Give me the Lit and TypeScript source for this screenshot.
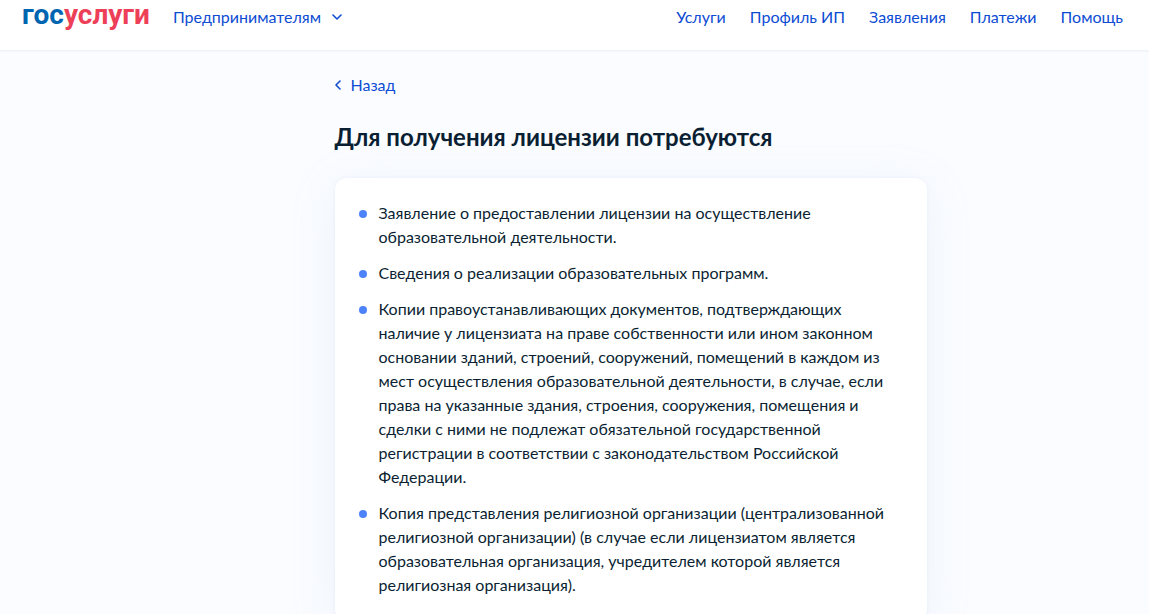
import { LitElement, html, css } from "lit";
import { customElement } from "lit/decorators.js";

const NAV = ["Услуги", "Профиль ИП", "Заявления", "Платежи", "Помощь"];

const DOCUMENTS = [
  "Заявление о предоставлении лицензии на осуществление образовательной деятельности.",
  "Сведения о реализации образовательных программ.",
  "Копии правоустанавливающих документов, подтверждающих наличие у лицензиата на праве собственности или ином законном основании зданий, строений, сооружений, помещений в каждом из мест осуществления образовательной деятельности, в случае, если права на указанные здания, строения, сооружения, помещения и сделки с ними не подлежат обязательной государственной регистрации в соответствии с законодательством Российской Федерации.",
  "Копия представления религиозной организации (централизованной религиозной организации) (в случае если лицензиатом является образовательная организация, учредителем которой является религиозная организация).",
];

@customElement("app-root")
export class AppRoot extends LitElement {
  static styles = css`
    :host {
      display: block;
      min-height: 100vh;
      background: #fafcff;
      color: #0b1f33;
      font: 16px/24px Lato, "Open Sans", sans-serif;
    }
    .header {
      display: flex;
      align-items: center;
      box-sizing: border-box;
      height: 50px;
      padding: 0 26px 16px 22px;
      background: #fff;
      box-shadow: 0 1px 2px rgba(40, 70, 130, 0.09);
    }
    a, button {
      color: #0d4cd3;
      text-decoration: none;
    }
    .logo {
      align-self: flex-start;
      font-family: Roboto, Lato, sans-serif;
      font-size: 28px;
      line-height: 30px;
      font-weight: 700;
      color: #0065b1;
      margin-right: 23px;
    }
    .accent { color: #ee3f58; }
    .role {
      display: flex;
      align-items: center;
      gap: 11px;
      padding: 0;
      border: 0;
      background: none;
      font: inherit;
    }
    .nav { display: flex; gap: 24px; margin-left: auto; }
    .main {
      max-width: 592px;
      margin: 0 auto;
      padding: 22px 0 0 112px;
    }
    .back { display: inline-flex; align-items: center; gap: 8px; }
    .title { margin: 24px 0 25px; font-size: 24px; line-height: 32px; font-weight: 700; }
    .card {
      padding: 23px 40px 24px 24px;
      border-radius: 12px;
      background: #fff;
      box-shadow: 0 8px 48px rgba(155, 175, 220, 0.13), 0 0 4px rgba(155, 175, 220, 0.12);
    }
    .list { display: grid; gap: 12px; margin: 0; padding: 0; list-style: none; }
    .item { display: flex; gap: 12px; }
    .item::before {
      content: "";
      flex: none;
      width: 8px;
      height: 8px;
      margin-top: 9px;
      border-radius: 50%;
      background: #4d83fa;
    }
  `;

  render() {
    return html`
      <header class="header">
        <a class="logo" href="#">гос<span class="accent">услуги</span></a>
        <button class="role" type="button">
          Предпринимателям
          <svg width="10" height="6" viewBox="0 0 10 6" fill="none" stroke="currentColor" stroke-width="1.6" stroke-linecap="round" stroke-linejoin="round" aria-hidden="true"><path d="M1 1l4 4 4-4" /></svg>
        </button>
        <nav class="nav">${NAV.map((n) => html`<a href="#">${n}</a>`)}</nav>
      </header>
      <main class="main">
        <a class="back" href="#">
          <svg width="8" height="10" viewBox="0 0 8 10" fill="none" stroke="currentColor" stroke-width="1.6" stroke-linecap="round" stroke-linejoin="round" aria-hidden="true"><path d="M5 1L1 5l4 4" /></svg>
          Назад
        </a>
        <h1 class="title">Для получения лицензии потребуются</h1>
        <section class="card">
          <ul class="list">${DOCUMENTS.map((d) => html`<li class="item">${d}</li>`)}</ul>
        </section>
      </main>
    `;
  }
}
